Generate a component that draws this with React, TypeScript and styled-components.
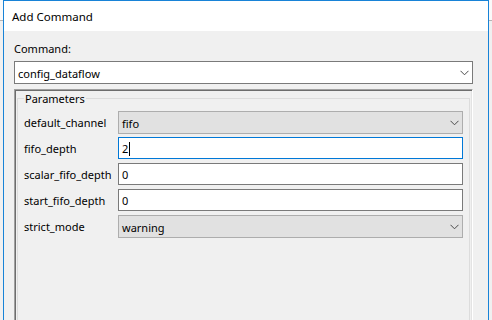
import React from "react";
import styled, { createGlobalStyle } from "styled-components";

const Global = createGlobalStyle`
  html, body { margin: 0; padding: 0; }
  body {
    width: 492px;
    height: 320px;
    overflow: hidden;
    background: linear-gradient(#fafafa 0 20px, #b4b4b4 20px 21px, #f0f0f0 21px);
    font-family: "Noto Sans", "Open Sans", sans-serif;
  }
`;

const Window = styled.div`
  margin-left: 3px;
  width: 486px;
  height: 330px;
  box-sizing: border-box;
  border: 1px solid #1883d7;
  border-bottom: none;
  background: #f0f0f0;
  display: flex;
  flex-direction: column;
`;

const TitleBar = styled.div`
  height: 30px;
  flex: none;
  background: #ffffff;
  display: flex;
  align-items: center;
  padding-left: 8px;
  font-size: 11.5px;
  color: #000;
`;

const Body = styled.div`
  flex: 1;
  display: flex;
  flex-direction: column;
  padding: 10px 15px 0 10px;
`;

const Caption = styled.div`
  font-size: 11px;
  line-height: 15px;
  color: #000;
  margin-bottom: 5px;
`;

const Combo = styled.div<{ $flat?: boolean }>`
  height: 23px;
  box-sizing: border-box;
  border: 1px solid ${(p) => (p.$flat ? "#adadad" : "#7a7a7a")};
  background: ${(p) => (p.$flat ? "#e1e1e1" : "#ffffff")};
  display: flex;
  align-items: center;
  justify-content: space-between;
  padding: 1px 3px 0 3px;
  font-size: 11px;
  color: #000;
`;

const Chevron = () => (
  <svg width="9" height="6" viewBox="0 0 9 6">
    <polyline points="0.5,0.8 4.5,4.8 8.5,0.8" fill="none" stroke="#4a4a4a" strokeWidth="1" />
  </svg>
);

const Panel = styled.div`
  margin-top: 5px;
  flex: 1;
  box-sizing: border-box;
  border-top: 1px solid #a0a0a0;
  border-left: 1px solid #a0a0a0;
  border-right: 1px solid #ffffff;
  box-shadow: inset 1px 1px 0 #6d6d6d, inset -1px 0 0 #e3e3e3;
  padding: 1px 2px 0 2px;
  display: flex;
  flex-direction: column;
`;

const Group = styled.fieldset`
  margin: 0;
  flex: 1;
  border: 1px solid #dcdcdc;
  border-bottom: none;
  padding: 5px 6px 0 6px;
  display: grid;
  grid-template-columns: 94px 1fr;
  grid-auto-rows: 22px;
  row-gap: 4px;
  align-content: start;
`;

const Legend = styled.legend`
  padding: 0 1px;
  margin-left: 0;
  font-size: 11px;
  line-height: 15px;
  color: #000;
`;

const Label = styled.div`
  font-size: 11px;
  display: flex;
  align-items: center;
  padding-top: 1px;
  color: #000;
`;

const Input = styled.div<{ $focus?: boolean }>`
  box-sizing: border-box;
  height: 22px;
  border: 1px solid ${(p) => (p.$focus ? "#0078d7" : "#7a7a7a")};
  background: #ffffff;
  display: flex;
  align-items: center;
  padding: 1px 0 0 3px;
  font-size: 11px;
  color: #000;
`;

const Caret = styled.span`
  display: inline-block;
  width: 1px;
  height: 14px;
  background: #000;
  margin-left: 1px;
`;

type Row =
  | { label: string; kind: "combo"; value: string }
  | { label: string; kind: "input"; value: string; focus?: boolean };

const rows: Row[] = [
  { label: "default_channel", kind: "combo", value: "fifo" },
  { label: "fifo_depth", kind: "input", value: "2", focus: true },
  { label: "scalar_fifo_depth", kind: "input", value: "0" },
  { label: "start_fifo_depth", kind: "input", value: "0" },
  { label: "strict_mode", kind: "combo", value: "warning" },
];

export default function App() {
  return (
    <>
      <Global />
      <Window>
        <TitleBar>Add Command</TitleBar>
        <Body>
          <Caption>Command:</Caption>
          <Combo>
            <span>config_dataflow</span>
            <Chevron />
          </Combo>
          <Panel>
            <Group>
              <Legend>Parameters</Legend>
              {rows.map((r) => (
                <React.Fragment key={r.label}>
                  <Label>{r.label}</Label>
                  {r.kind === "combo" ? (
                    <Combo $flat>
                      <span>{r.value}</span>
                      <Chevron />
                    </Combo>
                  ) : (
                    <Input $focus={r.focus}>
                      {r.value}
                      {r.focus && <Caret />}
                    </Input>
                  )}
                </React.Fragment>
              ))}
            </Group>
          </Panel>
        </Body>
      </Window>
    </>
  );
}
